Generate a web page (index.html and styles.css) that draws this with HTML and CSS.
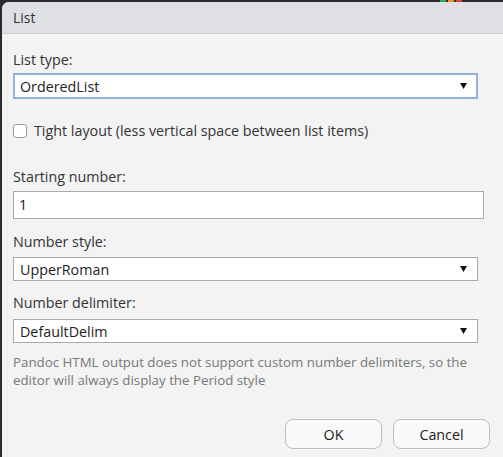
FILE: index.html
```html
<!DOCTYPE html>
<html>
<head>
<meta charset="utf-8">
<link rel="stylesheet" href="styles.css">
</head>
<body>
<div class="screen">
  <div class="topstrip">
    <span class="dot green"></span><span class="dot orange"></span><span class="dot red"></span>
  </div>
  <div class="dialog">
    <div class="titlebar">List</div>
    <div class="content">
      <div class="label l1">List type:</div>
      <div class="select s1 focused">
        <span>OrderedList</span>
        <svg class="arrow" width="7" height="6" viewBox="0 0 7 6"><path d="M0 0H7L3.5 6Z" fill="#111"/></svg>
      </div>
      <label class="check">
        <span class="box"></span>
        <span>Tight layout (less vertical space between list items)</span>
      </label>
      <div class="label l2">Starting number:</div>
      <div class="input">1</div>
      <div class="label l3">Number style:</div>
      <div class="select s2">
        <span>UpperRoman</span>
        <svg class="arrow" width="7" height="6" viewBox="0 0 7 6"><path d="M0 0H7L3.5 6Z" fill="#111"/></svg>
      </div>
      <div class="label l4">Number delimiter:</div>
      <div class="select s3">
        <span>DefaultDelim</span>
        <svg class="arrow" width="7" height="6" viewBox="0 0 7 6"><path d="M0 0H7L3.5 6Z" fill="#111"/></svg>
      </div>
      <p class="note">Pandoc HTML output does not support custom number delimiters, so the editor will always display the Period style</p>
      <div class="buttons">
        <button class="btn">OK</button>
        <button class="btn">Cancel</button>
      </div>
    </div>
  </div>
</div>
</body>
</html>
```
FILE: styles.css
```css
html, body {
  margin: 0;
  padding: 0;
  width: 503px;
  height: 457px;
  overflow: hidden;
  background: #2a2b2d;
}
.screen {
  position: relative;
  width: 503px;
  height: 457px;
  padding: 2px 0 0 2px;
  box-sizing: border-box;
  font-family: "Open Sans", "Noto Sans", sans-serif;
  font-size: 14.3px;
  color: #333;
}
.topstrip {
  position: absolute;
  top: 0;
  left: 440px;
  height: 2px;
  display: flex;
  gap: 2px;
}
.dot { width: 6px; height: 2px; }
.green { background: #2fa84f; }
.orange { background: #e8912c; }
.red { background: #d9432f; }
.dialog {
  height: 455px;
  background: #f2f3f2;
  border-top-left-radius: 7px;
  overflow: hidden;
}
.titlebar {
  height: 31px;
  line-height: 32px;
  background: #dfe0e3;
  border-bottom: 1px solid #cfd0d3;
  padding-left: 11px;
  font-size: 14px;
  color: #333;
}
.content {
  padding: 16px 0 0 11px;
}
.label {
  line-height: 20px;
  height: 20px;
}
.l2 { margin-top: 26px; }
.l3 { margin-top: 13px; }
.l4 { margin-top: 12px; }
.select {
  width: 465px;
  box-sizing: border-box;
  background: #fff;
  border: 1px solid #a9a9a9;
  display: flex;
  align-items: center;
  justify-content: space-between;
  padding: 0 10px 0 6px;
  color: #222;
}
.s1 {
  margin-top: 3px;
  height: 26px;
  border: 2px solid #93b1df;
  padding: 0 9px 0 5px;
}
.s2 { margin-top: 5px; height: 24px; }
.s3 { margin-top: 6px; height: 24px; }
.arrow { display: block; }
.check {
  margin-top: 22px;
  display: flex;
  align-items: center;
  gap: 7px;
  line-height: 20px;
}
.box {
  width: 14px;
  height: 14px;
  box-sizing: border-box;
  border: 1px solid #9a9a9a;
  border-radius: 3px;
  background: #fff;
}
.input {
  margin-top: 4px;
  width: 471px;
  height: 28px;
  box-sizing: border-box;
  background: #fff;
  border: 1px solid #a9a9a9;
  padding-left: 5px;
  line-height: 26px;
  color: #222;
}
.note {
  margin: 10px 0 0;
  width: 470px;
  line-height: 18px;
  color: #787878;
  font-size: 13.3px;
}
.buttons {
  margin-top: 30px;
  display: flex;
  gap: 11px;
  padding-left: 272px;
}
.btn {
  width: 97px;
  height: 30px;
  border: 1px solid #bdbdbd;
  border-radius: 8px;
  background: #f9f9f9;
  font-family: inherit;
  font-size: 14.3px;
  color: #222;
  padding: 0;
}
```
